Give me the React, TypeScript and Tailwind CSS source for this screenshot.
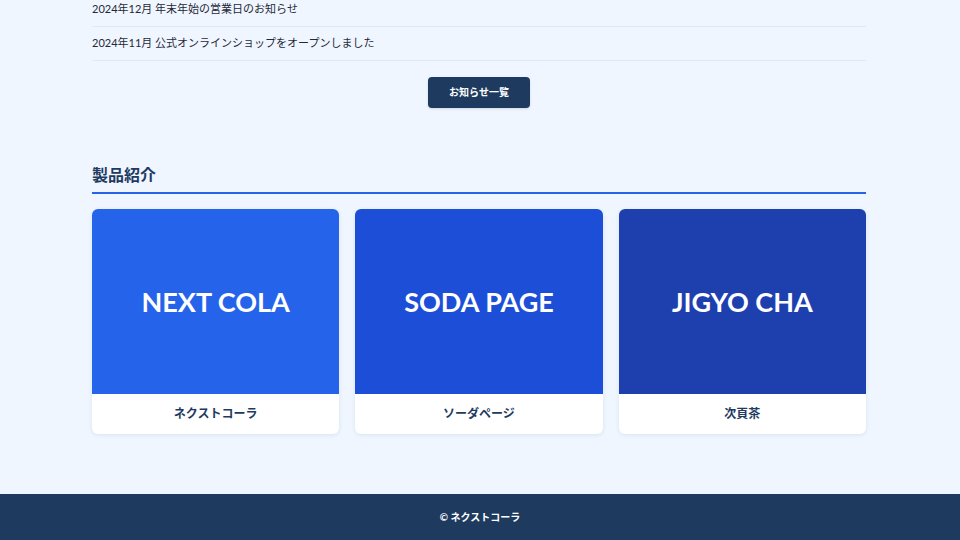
import React from 'react';

const news = [
    '2024年12月 年末年始の営業日のお知らせ',
    '2024年11月 公式オンラインショップをオープンしました',
];

const products = [
    { id: 'cola', title: 'NEXT COLA', name: 'ネクストコーラ', bg: 'bg-[#2563eb]' },
    { id: 'soda', title: 'SODA PAGE', name: 'ソーダページ', bg: 'bg-[#1d4ed8]' },
    { id: 'cha', title: 'JIGYO CHA', name: '次頁茶', bg: 'bg-[#1e40af]' },
];

const App: React.FC = () => {
    return (
        <div className="min-h-[540px] bg-[#eff6ff] flex flex-col font-['Lato','Noto_Sans_CJK_JP',sans-serif]">
            <main className="w-[774px] ml-[92px] flex-1">
                {/* News list (scrolled) */}
                <ul>
                    {news.map((item, idx) => (
                        <li
                            key={item}
                            className={`${idx === 0 ? 'pt-0' : 'pt-[7px]'} pb-[8px] border-b border-[#e2e8f0] text-[11px] leading-[18px] text-[#1f2937]`}
                        >
                            {item}
                        </li>
                    ))}
                </ul>

                <div className="flex justify-center mt-[16px]">
                    <button className="w-[102px] h-[31px] rounded bg-[#1e3a5f] text-white text-[10px] font-bold shadow-sm">
                        お知らせ一覧
                    </button>
                </div>

                {/* Products */}
                <section className="mt-[54px]">
                    <h2 className="text-[16px] leading-[26px] font-bold text-[#1e3a5f] pb-[4px] border-b-2 border-[#2563eb]">
                        製品紹介
                    </h2>
                    <div className="grid grid-cols-3 gap-4 mt-[15px]">
                        {products.map((p) => (
                            <div key={p.id} className="bg-white rounded-md overflow-hidden shadow-[0_1px_4px_rgba(30,58,95,0.1)]">
                                <div className={`${p.bg} h-[185px] flex items-center justify-center`}>
                                    <span className="text-white text-[27px] leading-[32px] font-bold">{p.title}</span>
                                </div>
                                <div className="h-[40px] flex items-center justify-center text-[12px] font-bold text-[#1e3a5f]">
                                    {p.name}
                                </div>
                            </div>
                        ))}
                    </div>
                </section>
            </main>

            <footer className="mt-[60px] h-[46px] bg-[#1e3a5f] flex items-center justify-center">
                <p className="text-white text-[10px] font-bold">© ネクストコーラ</p>
            </footer>
        </div>
    );
};

export default App;
